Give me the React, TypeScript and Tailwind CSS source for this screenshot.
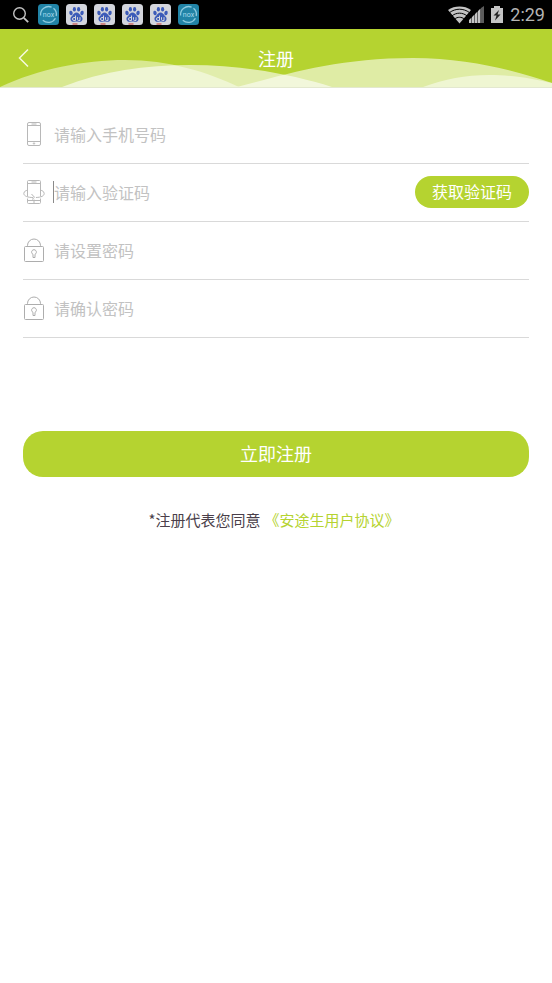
import { useId, type ReactNode } from "react";

function SearchIcon() {
  return (
    <svg viewBox="0 0 18 18" className="size-[18px]" fill="none" stroke="#c4c4c4" strokeWidth="1.4">
      <circle cx="7.5" cy="7.5" r="5.8" />
      <path d="M11.8 11.8l4.400 4.400" strokeWidth="1.8" />
    </svg>
  );
}

function NoxIcon() {
  return (
    <svg viewBox="0 0 21 21" className="size-[21px]">
      <rect width="21" height="21" rx="3.5" fill="#2183a6" />
      <g fill="none" stroke="#8fcbe0" strokeWidth="1.3">
        <path d="M2.600 11.500a8 8 0 0 1 11-8.300" />
        <path d="M15.500 4.200a8 8 0 0 1 2.700 7.800" />
        <path d="M17.400 14.200a8 8 0 0 1-12.600 2" />
      </g>
      <text
        x="10.5"
        y="12.800"
        textAnchor="middle"
        fontSize="7"
        fill="#a8dcec"
        fontFamily="Roboto, sans-serif"
      >
        nox
      </text>
    </svg>
  );
}

function BaiduIcon() {
  return (
    <svg viewBox="0 0 21 21" className="size-[21px]">
      <rect width="21" height="21" rx="3.5" fill="#d3d5dc" />
      <g fill="#3c5bb8">
        <ellipse cx="5" cy="9" rx="1.700" ry="2.200" transform="rotate(-15 5 9)" />
        <ellipse cx="8.400" cy="5.300" rx="1.600" ry="2.300" />
        <ellipse cx="12.600" cy="5.300" rx="1.600" ry="2.300" />
        <ellipse cx="16" cy="9" rx="1.700" ry="2.200" transform="rotate(15 16 9)" />
        <path d="M10.500 8.600c2 0 2.800 1.500 4 2.800 1.400 1.300 2.400 2.300 2 4.100-.4 1.900-2 2.500-3.500 2.200-1.600-.3-3.400-.3-5 0-1.500.3-3.100-.3-3.500-2.200-.4-1.800.6-2.800 2-4.100 1.200-1.300 2-2.800 4-2.800z" />
      </g>
      <path
        d="M9.500 11.500v5H8a1.500 1.500 0 0 1 0-3h1.500M11.500 13.200v2.200c0 .8.400 1.100 1 1.100H14v-3.300"
        fill="none"
        stroke="#d3d5dc"
      />
      <path d="M6.500 20h5" stroke="#c8372d" strokeWidth="1" />
    </svg>
  );
}

function StatusIcons() {
  return (
    <svg viewBox="0 0 58 20" className="h-5 w-[58px]">
      <path d="M11.500 18.500L0 5C6.500.4 16.500.4 23 5z" fill="#c4c4c4" />
      <g fill="none" stroke="#000">
        <path d="M1.500 7.600c6-4.500 14-4.500 20 0" />
        <path d="M4 10.800c4.600-3.500 10.400-3.500 15 0" />
        <path d="M6.600 14c3-2.300 6.800-2.300 9.800 0" />
      </g>
      <path d="M21 18v-3l2.500-2.500V18zM24 18v-6l2.500-2.500V18zM27 18V9l2.500-2.500V18zM30 18V6l2.500-2.500V18z" fill="#c4c4c4" />
      <path d="M33 18V3l3-2v17z" fill="#5c5c5c" />
      <path d="M43 3h3V1h6v2h3v15H43z" fill="#c4c4c4" />
      <path d="M51 5l-5.500 5.500h3L47 15.500l5.500-6h-3z" fill="#222" />
    </svg>
  );
}

function StatusBar() {
  return (
    <div className="flex h-[29px] items-center justify-between bg-black pl-3 pr-[7px]">
      <div className="flex items-center gap-2">
        <SearchIcon />
        <div className="flex items-center gap-[7px]">
          <NoxIcon />
          <BaiduIcon />
          <BaiduIcon />
          <BaiduIcon />
          <BaiduIcon />
          <NoxIcon />
        </div>
      </div>
      <div className="flex items-center gap-1">
        <StatusIcons />
        <span className="font-[Roboto,sans-serif] text-lg leading-none text-[#b4b4b4]">2:29</span>
      </div>
    </div>
  );
}

function Waves() {
  return (
    <svg
      viewBox="0 0 552 58"
      preserveAspectRatio="none"
      className="absolute inset-0 h-full w-full"
      fill="#fff"
      aria-hidden="true"
    >
      <path d="M0 58C38 40 84 31 125 31c44 0 82 12 114 27z" opacity=".47" />
      <path d="M237 58C284 46 336 29 413 29c58 0 106 14 139 25v4z" opacity=".57" />
      <path d="M62 58C102 42 146 36 190 36c54 0 104 10 142 22z" opacity=".6" />
      <path d="M423 58c22-8 42-12 66-12 26 0 44 4 63 8v4z" opacity=".5" />
    </svg>
  );
}

function Header() {
  return (
    <header className="relative flex h-[59px] items-center border-b border-[#e3e8cf] bg-[#b5d330]">
      <Waves />
      <button type="button" aria-label="返回" className="relative flex h-full w-12 items-center pl-[18px]">
        <svg viewBox="0 0 12 20" className="h-5 w-3" fill="none" stroke="#f6fadf" strokeWidth="1.5">
          <path d="M10 1.500L1.500 10l8.500 8.500" />
        </svg>
      </button>
      <h1 className="relative flex-1 pr-12 text-center text-lg text-white">注册</h1>
    </header>
  );
}

function PhoneIcon() {
  return (
    <svg viewBox="0 0 22 26" className="h-[26px] w-[22px]" fill="none" stroke="#b8b8b8">
      <rect x="4.500" y="1.500" width="13" height="23" rx="1.500" />
      <path d="M4.500 4.500h13M4.500 20.500h13M8.500 3h5" />
      <circle cx="11" cy="22.500" r=".7" />
    </svg>
  );
}

function CodeIcon() {
  return (
    <svg viewBox="0 0 22 26" className="h-[26px] w-[22px]" fill="none" stroke="#b8b8b8">
      <path d="M4.500 17.500v-15q0-1 1-1h11q1 0 1 1v15M4.500 4.500h13M8.500 3h5" />
      <path d="M4.500 19.500v4q0 1 1 1h11q1 0 1-1v-4M4.500 21.500h13M11 20.500v4" />
      <path d="M4.500 11.500H3.200Q.8 12.500.8 14.500c0 2.500 4 4 9.200 4M17.500 11.500h1.300q2.400 1 2.400 3c0 2.500-3 3.800-8.200 4M8.500 15l3 3.300-2.500 2.200" />
    </svg>
  );
}

function LockIcon() {
  return (
    <svg viewBox="0 0 22 26" className="h-[26px] w-[22px]" fill="none" stroke="#adadad">
      <rect x="1.500" y="9.500" width="19" height="15" rx="1" />
      <path d="M4.500 9.500V8.500a6.500 6.500 0 0 1 13 0v1" />
      <path d="M10 17.300a2.400 2.400 0 1 1 2 0v3.200h-2z" />
    </svg>
  );
}

type FieldProps = {
  icon: ReactNode;
  placeholder: string;
  type?: string;
  caret?: boolean;
  children?: ReactNode;
};

function Field({ icon, placeholder, type = "text", caret, children }: FieldProps) {
  const id = useId();

  return (
    <div className="flex h-[58px] items-center border-b border-[#d9d9d9] pb-0.5">
      <label htmlFor={id} aria-label={placeholder} className="shrink-0">
        {icon}
      </label>
      <span className={`ml-2 h-[22px] w-px shrink-0 ${caret ? "bg-[#8a8a8a]" : "bg-transparent"}`} />
      <input
        id={id}
        type={type}
        placeholder={placeholder}
        className="h-full min-w-0 flex-1 bg-transparent text-base text-[#444] outline-none placeholder:text-[#c2c2c2]"
      />
      {children}
    </div>
  );
}

export default function App() {
  return (
    <div className="min-h-screen bg-white font-['Noto_Sans_CJK_SC',sans-serif]">
      <StatusBar />
      <Header />
      <form className="px-[23px] pt-[18px]" onSubmit={(e) => e.preventDefault()}>
        <Field icon={<PhoneIcon />} placeholder="请输入手机号码" type="tel" />
        <Field icon={<CodeIcon />} placeholder="请输入验证码" caret>
          <button type="button" className="h-8 shrink-0 rounded-full bg-[#b5d330] px-[17px] pb-0.5 text-base text-white">
            获取验证码
          </button>
        </Field>
        <Field icon={<LockIcon />} placeholder="请设置密码" type="password" />
        <Field icon={<LockIcon />} placeholder="请确认密码" type="password" />
        <button
          type="submit"
          className="mt-[93px] h-[46px] w-full rounded-[20px] bg-[#b5d330] pb-0.5 text-lg text-white"
        >
          立即注册
        </button>
        <p className="mt-[31px] flex justify-center gap-1 pr-1 text-[15px] leading-6 text-[#4a3f4a]">
          <span>*注册代表您同意</span>
          <a href="#agreement" className="text-[#b5d330]">
            《安途生用户协议》
          </a>
        </p>
      </form>
    </div>
  );
}
